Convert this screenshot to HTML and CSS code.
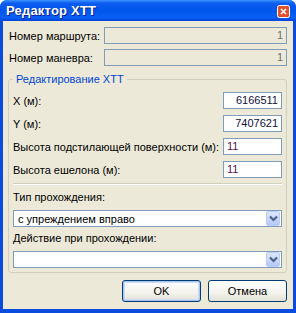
FILE: index.html
```html
<!DOCTYPE html>
<html lang="ru">
  <head>
    <meta charset="UTF-8" />
    <title>Редактор ХТТ</title>
    <link rel="stylesheet" href="styles.css">
  </head>
  <body>
    <div class="window">
      <div class="titlebar">
        <span class="title">Редактор ХТТ</span>
        <span class="close-btn">
          <svg width="13" height="13" viewBox="0 0 13 13">
            <rect x="0.5" y="0.5" width="12" height="12" rx="2" fill="#E3502F" stroke="#fff" />
            <path d="M4 4 L9 9 M9 4 L4 9" stroke="#fff" stroke-width="1.6" />
          </svg>
        </span>
      </div>

      <div class="client">
        <div class="row">
          <span class="label">Номер маршрута:</span>
          <div class="field readonly wide">1</div>
        </div>
        <div class="row">
          <span class="label">Номер маневра:</span>
          <div class="field readonly wide">1</div>
        </div>

        <fieldset class="group">
          <legend>Редактирование ХТТ</legend>
          <div class="group-rows">
            <div class="row">
              <span class="label">X (м):</span>
              <div class="field num">6166511</div>
            </div>
            <div class="row">
              <span class="label">Y (м):</span>
              <div class="field num">7407621</div>
            </div>
            <div class="row">
              <span class="label">Высота подстилающей поверхности (м):</span>
              <div class="field edit">11</div>
            </div>
            <div class="row">
              <span class="label">Высота ешелона (м):</span>
              <div class="field edit">11</div>
            </div>
          </div>

          <div class="divider"></div>

          <div class="combo-label">Тип прохождения:</div>
          <div class="combo">
            <span class="combo-text">с упреждением вправо</span>
            <span class="combo-btn">
              <svg width="9" height="7" viewBox="0 0 9 7">
                <path d="M1 1.5 L4.5 5 L8 1.5" fill="none" stroke="#4D6185" stroke-width="2.2" />
              </svg>
            </span>
          </div>

          <div class="combo-label">Действие при прохождении:</div>
          <div class="combo">
            <span class="combo-text"></span>
            <span class="combo-btn">
              <svg width="9" height="7" viewBox="0 0 9 7">
                <path d="M1 1.5 L4.5 5 L8 1.5" fill="none" stroke="#4D6185" stroke-width="2.2" />
              </svg>
            </span>
          </div>
        </fieldset>

        <div class="buttons">
          <button class="btn default">OK</button>
          <button class="btn">Отмена</button>
        </div>
      </div>
    </div>
  </body>
</html>
```

FILE: styles.css
```css
/* Global */
body {
  margin: 0;
  font-family: "Liberation Sans", Arial, sans-serif;
  font-size: 11px;
  color: #000;
  background: #fff;
}

.window {
  width: 296px;
  height: 313px;
  display: flex;
  flex-direction: column;
  background: #0A4BE0;
  border-radius: 7px 7px 0 0;
  overflow: hidden;
}

/* Title bar */
.titlebar {
  height: 21px;
  flex-shrink: 0;
  display: flex;
  align-items: center;
  justify-content: space-between;
  padding: 0 6px 0 6px;
  background: linear-gradient(
    #3A93FF 0%,
    #0C5CF0 15%,
    #0055EA 50%,
    #0A5FF5 85%,
    #0040D8 100%
  );
}

.title {
  color: #fff;
  font-weight: bold;
  font-size: 13px;
  text-shadow: 1px 1px 0 #0A1E8C;
  letter-spacing: 0.2px;
}

.close-btn {
  display: flex;
  margin-top: 1px;
}

/* Client area */
.client {
  flex: 1;
  margin: 0 3px 4px 3px;
  padding: 6px 6px 6px 5px;
  background: #ECE9D8;
  display: flex;
  flex-direction: column;
}

.row {
  display: flex;
  align-items: center;
  justify-content: space-between;
  height: 17px;
}

.row + .row {
  margin-top: 5px;
}

.client > .row {
  padding-left: 1px;
}

.field {
  box-sizing: border-box;
  height: 17px;
  border: 1px solid #7F9DB9;
  background: #fff;
  padding: 0 3px;
  line-height: 15px;
}

.field.readonly {
  background: #ECE9D8;
  color: #6F6F6F;
  text-align: right;
}

.field.wide {
  width: 183px;
}

.field.num {
  width: 59px;
  text-align: right;
  color: #10103A;
}

.field.edit {
  width: 59px;
  color: #5C0F4C;
}

/* Group */
.group {
  margin: 7px 0 0 0;
  padding: 6px 4px 4px 4px;
  border: 1px solid #D0D0BF;
  border-radius: 3px;
  min-width: 0;
}

.group legend {
  color: #0046D5;
  padding: 0 3px;
  margin-left: 0;
  line-height: 13px;
}

.group-rows .row + .row {
  margin-top: 6px;
}

.divider {
  margin-top: 5px;
  height: 0;
  border-top: 1px solid #D0D0BF;
  border-bottom: 1px solid #fff;
}

.combo-label {
  line-height: 13px;
  margin-top: 6px;
}

.combo-label + .combo {
  margin-top: 6px;
}

.combo {
  box-sizing: border-box;
  height: 17px;
  border: 1px solid #7F9DB9;
  background: #fff;
  display: flex;
  align-items: center;
  justify-content: space-between;
  padding: 0 1px 0 4px;
}

.combo + .combo-label {
  margin-top: 5px;
}

.combo-btn {
  width: 14px;
  height: 15px;
  box-sizing: border-box;
  border: 1px solid #B9CDF8;
  border-radius: 2px;
  background: linear-gradient(#DCE7FE, #B4C8F6);
  display: flex;
  align-items: center;
  justify-content: center;
}

/* Buttons */
.buttons {
  display: flex;
  justify-content: flex-end;
  gap: 7px;
  margin-top: 7px;
}

.btn {
  box-sizing: border-box;
  width: 79px;
  height: 22px;
  font-family: "Liberation Sans", Arial, sans-serif;
  font-size: 11px;
  color: #000;
  border: 1px solid #003C74;
  border-radius: 3px;
  background: linear-gradient(#FFFFFF 0%, #F3F2EC 60%, #E3E1D6 100%);
  padding: 0;
}

.btn.default {
  box-shadow: inset 0 0 0 1px #A8C4F0, inset 0 0 0 2px #CEDCF7;
}
```
